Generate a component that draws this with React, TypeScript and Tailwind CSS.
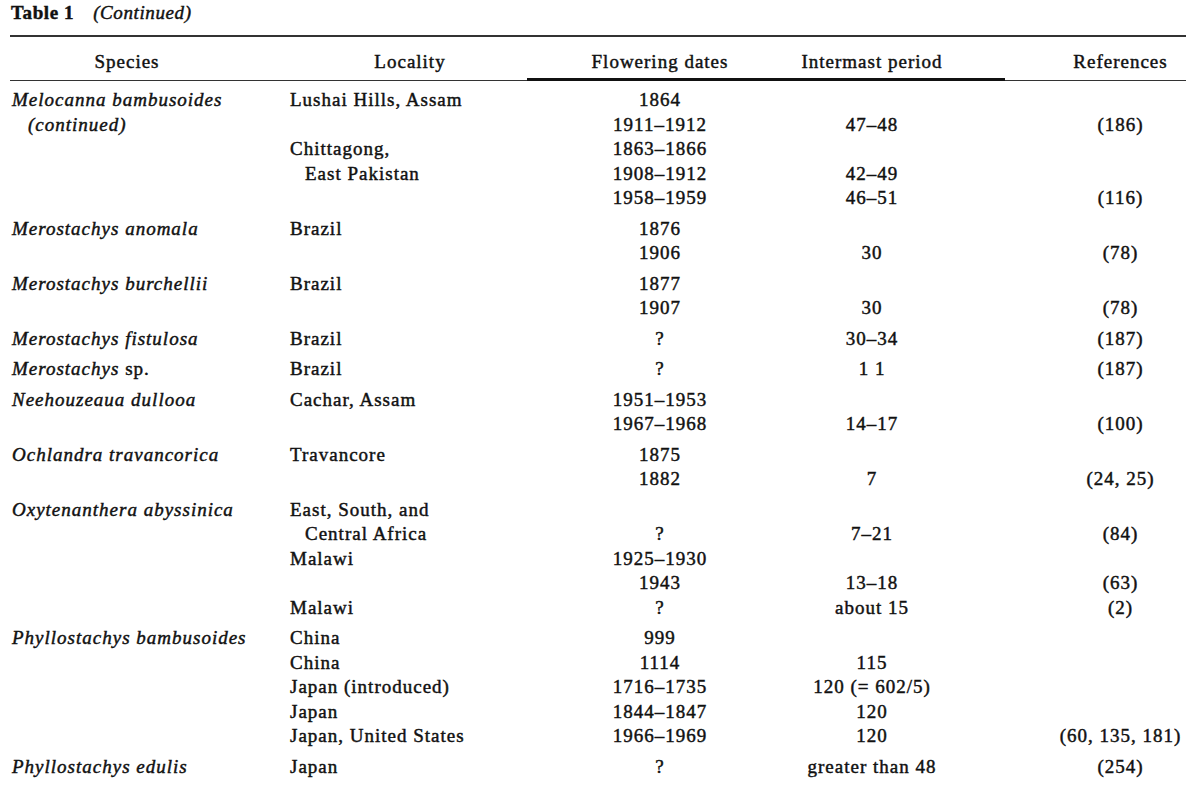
import React from "react";

type Row = {
  s?: React.ReactNode;
  sIndent?: boolean;
  l?: string;
  lIndent?: boolean;
  f?: string;
  i?: string;
  r?: string;
};

const groups: Row[][] = [
  [
    { s: "Melocanna bambusoides", l: "Lushai Hills, Assam", f: "1864" },
    { s: "(continued)", sIndent: true, f: "1911–1912", i: "47–48", r: "(186)" },
    { l: "Chittagong,", f: "1863–1866" },
    { l: "East Pakistan", lIndent: true, f: "1908–1912", i: "42–49" },
    { f: "1958–1959", i: "46–51", r: "(116)" },
  ],
  [
    { s: "Merostachys anomala", l: "Brazil", f: "1876" },
    { f: "1906", i: "30", r: "(78)" },
  ],
  [
    { s: "Merostachys burchellii", l: "Brazil", f: "1877" },
    { f: "1907", i: "30", r: "(78)" },
  ],
  [{ s: "Merostachys fistulosa", l: "Brazil", f: "?", i: "30–34", r: "(187)" }],
  [
    {
      s: (
        <>
          Merostachys <span className="not-italic">sp.</span>
        </>
      ),
      l: "Brazil",
      f: "?",
      i: "1 1",
      r: "(187)",
    },
  ],
  [
    { s: "Neehouzeaua dullooa", l: "Cachar, Assam", f: "1951–1953" },
    { f: "1967–1968", i: "14–17", r: "(100)" },
  ],
  [
    { s: "Ochlandra travancorica", l: "Travancore", f: "1875" },
    { f: "1882", i: "7", r: "(24, 25)" },
  ],
  [
    { s: "Oxytenanthera abyssinica", l: "East, South, and" },
    { l: "Central Africa", lIndent: true, f: "?", i: "7–21", r: "(84)" },
    { l: "Malawi", f: "1925–1930" },
    { f: "1943", i: "13–18", r: "(63)" },
    { l: "Malawi", f: "?", i: "about 15", r: "(2)" },
  ],
  [
    { s: "Phyllostachys bambusoides", l: "China", f: "999" },
    { l: "China", f: "1114", i: "115" },
    { l: "Japan (introduced)", f: "1716–1735", i: "120 (= 602/5)" },
    { l: "Japan", f: "1844–1847", i: "120" },
    { l: "Japan, United States", f: "1966–1969", i: "120", r: "(60, 135, 181)" },
  ],
  [{ s: "Phyllostachys edulis", l: "Japan", f: "?", i: "greater than 48", r: "(254)" }],
];

function RowView({ row }: { row: Row }) {
  return (
    <div className="grid grid-cols-[290px_240px_260px_164px_245px] h-[24.5px] leading-[24.5px] whitespace-nowrap">
      <div className={row.sIndent ? "pl-[28px] italic" : "pl-[12px] italic"}>{row.s}</div>
      <div className={row.lIndent ? "pl-[15px]" : ""}>{row.l}</div>
      <div className="text-center">{row.f}</div>
      <div className="text-center">{row.i}</div>
      <div className="text-center pl-[88px]">{row.r}</div>
    </div>
  );
}

export default function App() {
  return (
    <div className="w-[1199px] h-[795px] bg-white text-[#111] font-['Liberation_Serif',serif] text-[19px] tracking-[1px] [-webkit-text-stroke:0.45px_#111] overflow-hidden">
      <div className="pl-[11px] pt-[1px] h-[25px] leading-[24px] text-[19px] tracking-[0.6px]">
        <span className="font-bold">Table 1</span>
        <span className="italic ml-[19px]">(Continued)</span>
      </div>
      <div className="mt-[10px] ml-[10px] w-[1176px] h-[1.5px] bg-[#333]" />
      <div className="mt-[13px] grid grid-cols-[254px_36px_240px_260px_164px_245px] h-[24.5px] leading-[24.5px] whitespace-nowrap">
        <div className="text-center">Species</div>
        <div />
        <div className="text-center">Locality</div>
        <div className="text-center">Flowering dates</div>
        <div className="text-center">Intermast period</div>
        <div className="text-center pl-[88px]">References</div>
      </div>
      <div className="mt-[4px] ml-[10px] flex items-end h-[3px]">
        <div className="w-[517px] h-[1.5px] bg-[#333]" />
        <div className="w-[478px] h-[3px] bg-[#111]" />
        <div className="w-[181px] h-[1.5px] bg-[#333]" />
      </div>
      <div className="mt-[7px] flex flex-col gap-[6px]">
        {groups.map((g, gi) => (
          <div key={gi}>
            {g.map((row, ri) => (
              <RowView key={ri} row={row} />
            ))}
          </div>
        ))}
      </div>
    </div>
  );
}
